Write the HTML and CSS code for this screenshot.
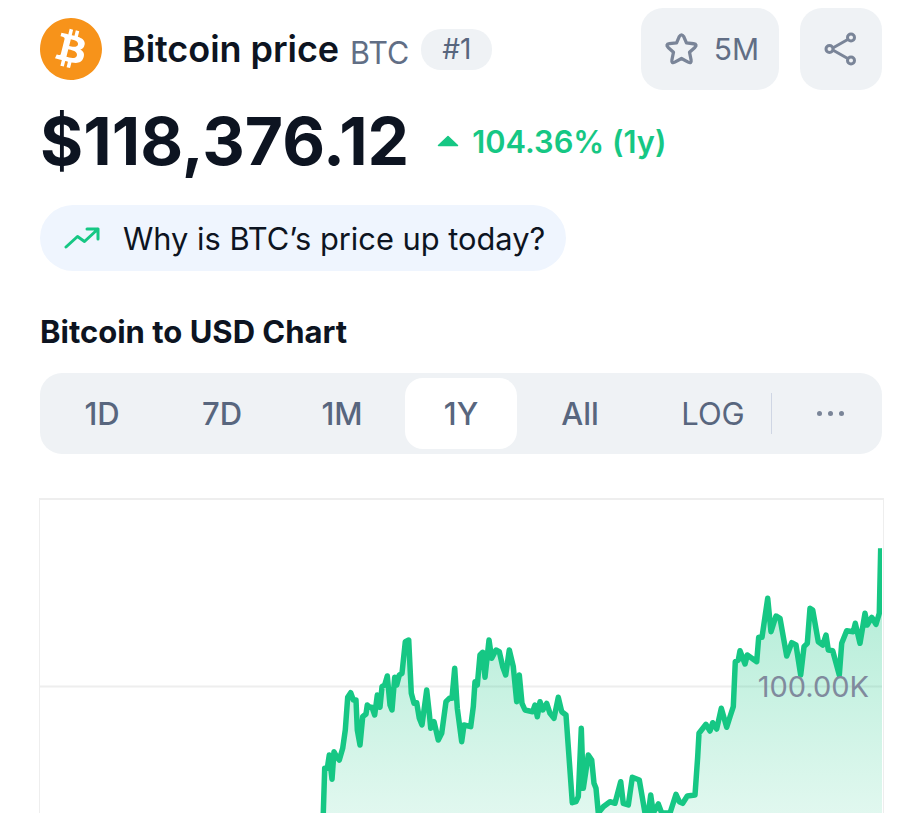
FILE: index.html
```html
<!DOCTYPE html>
<html lang="en">
<head>
<meta charset="utf-8">
<title>Bitcoin price</title>
<link rel="stylesheet" href="styles.css">
</head>
<body>
<main class="page">
  <header class="top">
    <svg class="logo" viewBox="0 0 24 24"><path fill="#f7931a" d="M23.638 14.904c-1.602 6.43-8.113 10.34-14.542 8.736C2.67 22.05-1.244 15.525.362 9.105 1.962 2.67 8.475-1.243 14.9.358c6.43 1.605 10.342 8.115 8.738 14.548v-.002zm-6.35-4.613c.24-1.59-.974-2.45-2.64-3.03l.54-2.153-1.315-.33-.525 2.107c-.345-.087-.705-.167-1.064-.25l.526-2.127-1.32-.33-.54 2.165c-.285-.067-.565-.132-.84-.2l-1.815-.45-.35 1.407s.975.225.955.236c.535.136.63.486.615.766l-1.477 5.92c-.075.166-.24.406-.614.314.015.02-.96-.24-.96-.24l-.66 1.51 1.71.426.93.242-.54 2.19 1.32.327.54-2.17c.36.1.705.19 1.05.273l-.51 2.154 1.32.33.545-2.19c2.24.427 3.93.257 4.64-1.774.57-1.637-.03-2.58-1.217-3.196.854-.193 1.5-.76 1.68-1.93h.01zm-3.01 4.22c-.404 1.64-3.157.75-4.05.53l.72-2.9c.896.23 3.757.67 3.33 2.37zm.41-4.24c-.37 1.49-2.662.735-3.405.55l.654-2.64c.744.18 3.137.524 2.75 2.084v.006z"/></svg>
    <h1 class="name">Bitcoin price</h1>
    <span class="symbol">BTC</span>
    <span class="rank">#1</span>
    <div class="actions">
      <button class="action watch">
        <svg class="star" viewBox="0 0 36 36"><path d="M15.800 5.500Q18 2 20.200 5.500L22.800 11.500 29.800 12.400Q33.800 13 31 16L25.800 20.700 27.300 28Q28 32 24.500 30.300L18 26.700 11.500 30.300Q8 32 8.700 28L10.200 20.700 5 16Q2.200 13 6.200 12.400L13.200 11.500z"/></svg>
        <span>5M</span>
      </button>
      <button class="action share" aria-label="Share">
        <svg class="share-icon" viewBox="0 0 36 36"><path d="M8 18L26.500 7.500M8 18l18.500 10.500"/><circle cx="6.500" cy="18" r="3.500"/><circle cx="28" cy="6.500" r="3.500"/><circle cx="28" cy="29.500" r="3.500"/></svg>
      </button>
    </div>
  </header>

  <div class="price-row">
    <span class="price">$118,376.12</span>
    <span class="change"><svg class="tri" viewBox="0 0 22 12"><path d="M11 1.500L20.500 10.500H1.500z"/></svg>104.36% (1y)</span>
  </div>

  <a class="why">
    <svg class="trend" viewBox="0 0 36 24"><path d="M2 21L13.500 10.500 20.500 15.500 34 3M23 3h11v10"/></svg>
    <span>Why is BTC’s price up today?</span>
  </a>

  <h2 class="chart-title">Bitcoin to USD Chart</h2>

  <nav class="tabs">
    <span class="tab">1D</span>
    <span class="tab">7D</span>
    <span class="tab">1M</span>
    <span class="tab active">1Y</span>
    <span class="tab">All</span>
    <span class="tab log">LOG</span>
    <span class="more"><i></i><i></i><i></i></span>
  </nav>

  <section class="chart">
    <svg class="plot" viewBox="40 500 842 313">
      <defs>
        <linearGradient id="area" gradientUnits="userSpaceOnUse" x1="0" y1="548" x2="0" y2="813">
          <stop offset="0" stop-color="#16c784" stop-opacity=".36"/>
          <stop offset="1" stop-color="#16c784" stop-opacity=".13"/>
        </linearGradient>
      </defs>
      <line class="grid" x1="40" y1="686.500" x2="882" y2="686.500"/>
      <path class="fill" fill="url(#area)" d="M323.300 813L324.700 768.300 327.300 768.300 329.300 755 332 779.300 334 751.700 336.700 756.700 339.300 760 342.700 748.300 345.300 730 347.700 697.300 350.700 692.700 353.300 700 356 700 357.300 730 360 745 362.700 716.700 366 714 367.300 705 370 707.300 372 707.300 374.700 715 377.300 695 380 707.300 382 686.700 384.700 685 387.300 676 390 705 392 710 394.700 677.300 396.700 685 399.300 675 402 673.300 405.300 641.700 408.700 640 411.300 693.300 414 703.300 416.700 702.700 419.300 718.300 422 725 426.700 690 429.300 713.300 430.700 728.300 434 721.700 438.300 740 441.700 733.300 446 701.700 449.300 698.300 452 698.300 454.700 668.300 457.300 708.300 461.700 741.700 464 725 470.700 726.700 473.300 706.700 475 681.700 477.300 685 480 655 482.700 652.300 485 677.300 489 640 491.700 658.300 496 650 499.300 651.700 502.700 666.700 505.700 675 509.300 650 513.300 666.700 516.700 701.700 519.300 675 522 703.300 525 710 532.700 711.700 535 705 537.300 716.700 540 701.700 542.700 710 546.700 703.300 550 713.300 554 718.300 558.300 697.300 561.700 711.700 566 715 572.300 802.700 576 801.700 578.300 796.700 581.300 728.300 583.300 788.300 588.300 755 591.700 760 594 783.300 596 788.300 598.300 813 603.300 806.700 610 801.700 615 803.300 620.700 781.700 623.300 803.300 628.300 805 632.300 777.300 639.300 780 645 813 648.300 813 650.700 795 653.300 813 658.300 804 661.700 813 670 813 676 794.300 679.300 801.700 682.700 803.300 687.300 796 695 795 697.700 756.700 699 733.300 706 724.300 710 731 712.700 722.700 716.700 729 721.300 708.300 726.700 727.300 730 716.700 733.300 706.700 735.300 661.700 738.300 660 740 650.700 745 664 747.300 655 756.700 661.700 758.700 637.300 762 637.300 767.700 598.300 771 631.700 776 616 780 618.300 786.700 656 791.700 642.700 796 645 800.700 675 804 646.700 807.300 643.300 810 608.300 812.700 610 818.300 641.700 822.700 645 826 635 828.300 650 832.700 650.700 839.300 675 841.700 643.300 846.700 630.700 853.300 631.700 855.300 623.300 860 643.300 865 613.300 867.300 625 871.700 617.300 876 624.300 879.300 613.300 880.700 548.300 882 548.300 882 813z"/>
      <path class="line" d="M323.300 813L324.700 768.300 327.300 768.300 329.300 755 332 779.300 334 751.700 336.700 756.700 339.300 760 342.700 748.300 345.300 730 347.700 697.300 350.700 692.700 353.300 700 356 700 357.300 730 360 745 362.700 716.700 366 714 367.300 705 370 707.300 372 707.300 374.700 715 377.300 695 380 707.300 382 686.700 384.700 685 387.300 676 390 705 392 710 394.700 677.300 396.700 685 399.300 675 402 673.300 405.300 641.700 408.700 640 411.300 693.300 414 703.300 416.700 702.700 419.300 718.300 422 725 426.700 690 429.300 713.300 430.700 728.300 434 721.700 438.300 740 441.700 733.300 446 701.700 449.300 698.300 452 698.300 454.700 668.300 457.300 708.300 461.700 741.700 464 725 470.700 726.700 473.300 706.700 475 681.700 477.300 685 480 655 482.700 652.300 485 677.300 489 640 491.700 658.300 496 650 499.300 651.700 502.700 666.700 505.700 675 509.300 650 513.300 666.700 516.700 701.700 519.300 675 522 703.300 525 710 532.700 711.700 535 705 537.300 716.700 540 701.700 542.700 710 546.700 703.300 550 713.300 554 718.300 558.300 697.300 561.700 711.700 566 715 572.300 802.700 576 801.700 578.300 796.700 581.300 728.300 583.300 788.300 588.300 755 591.700 760 594 783.300 596 788.300 598.300 813 603.300 806.700 610 801.700 615 803.300 620.700 781.700 623.300 803.300 628.300 805 632.300 777.300 639.300 780 645 813 648.300 813 650.700 795 653.300 813 658.300 804 661.700 813 670 813 676 794.300 679.300 801.700 682.700 803.300 687.300 796 695 795 697.700 756.700 699 733.300 706 724.300 710 731 712.700 722.700 716.700 729 721.300 708.300 726.700 727.300 730 716.700 733.300 706.700 735.300 661.700 738.300 660 740 650.700 745 664 747.300 655 756.700 661.700 758.700 637.300 762 637.300 767.700 598.300 771 631.700 776 616 780 618.300 786.700 656 791.700 642.700 796 645 800.700 675 804 646.700 807.300 643.300 810 608.300 812.700 610 818.300 641.700 822.700 645 826 635 828.300 650 832.700 650.700 839.300 675 841.700 643.300 846.700 630.700 853.300 631.700 855.300 623.300 860 643.300 865 613.300 867.300 625 871.700 617.300 876 624.300 879.300 613.300 880.700 548.300"/>
    </svg>
    <span class="axis-label">100.00K</span>
  </section>
</main>
</body>
</html>
```

FILE: styles.css
```css
* { box-sizing: border-box; }

html, body {
  margin: 0;
  height: 813px;
  overflow: hidden;
  background: #fff;
}

body {
  font-family: Inter, "Liberation Sans", sans-serif;
  color: #0d1421;
}

.page {
  padding: 8px 38px 0 40px;
}

.top {
  display: flex;
  align-items: center;
  height: 82px;
}

.logo {
  width: 62px;
  height: 62px;
  flex: none;
}

.name {
  margin: 0 0 0 20px;
  font-size: 36px;
  font-weight: 600;
  line-height: 40px;
  letter-spacing: -.05px;
}

.symbol {
  margin: 8px 0 0 11px;
  font-size: 30.500px;
  line-height: 34px;
  font-weight: 400;
  color: #616e85;
}

.rank {
  display: flex;
  align-items: center;
  justify-content: center;
  width: 71px;
  height: 41px;
  margin: 0 0 0 12px;
  border-radius: 20px;
  background: #eff2f5;
  font-size: 28px;
  color: #58667e;
}

.actions {
  display: flex;
  gap: 21px;
  margin-left: auto;
}

.action {
  display: flex;
  align-items: center;
  justify-content: center;
  height: 82px;
  padding: 0;
  border: 0;
  border-radius: 22px;
  background: #eff2f5;
  font: inherit;
  font-size: 30px;
  color: #616e85;
}

.watch {
  gap: 14px;
  width: 138px;
  padding-left: 2px;
}

.share {
  width: 82px;
}

.star {
  width: 37px;
  height: 37px;
  fill: none;
  stroke: #7a8598;
  stroke-width: 3.200;
  stroke-linejoin: round;
}

.share-icon {
  width: 36px;
  height: 36px;
  fill: #eff2f5;
  stroke: #7a8598;
  stroke-width: 3;
}

.price-row {
  display: flex;
  align-items: center;
  height: 72px;
  margin-top: 15px;
}

.price {
  font-size: 66px;
  font-weight: 700;
  line-height: 72px;
}

.change {
  display: flex;
  align-items: center;
  gap: 13px;
  margin-left: 28px;
  font-size: 30.800px;
  font-weight: 600;
  color: #16c784;
}

.tri {
  width: 22px;
  height: 12px;
  fill: #16c784;
  stroke: #16c784;
  stroke-width: 1.500;
  stroke-linejoin: round;
}

.why {
  display: inline-flex;
  align-items: center;
  gap: 23px;
  width: 526px;
  height: 66px;
  margin-top: 28px;
  padding-left: 24px;
  border-radius: 33px;
  background: #eff5fe;
  font-size: 30.800px;
  color: #0d1421;
}

.trend {
  width: 36px;
  height: 24px;
  fill: none;
  stroke: #16c784;
  stroke-width: 3;
  stroke-linecap: round;
  stroke-linejoin: round;
}

.chart-title {
  margin: 39px 0 0;
  font-size: 31px;
  font-weight: 700;
  line-height: 44px;
}

.tabs {
  display: flex;
  align-items: center;
  height: 81px;
  margin-top: 19px;
  padding: 0 0 0 2px;
  border-radius: 22px;
  background: #eff2f5;
}

.tab {
  display: flex;
  align-items: center;
  justify-content: center;
  width: 120px;
  height: 71px;
  font-size: 31px;
  font-weight: 500;
  color: #58667e;
}

.active {
  flex: none;
  width: 112px;
  margin: 0 3px;
  border-radius: 18px;
  background: #fff;
}

.log {
  width: 116px;
  margin-left: 15px;
  font-weight: 400;
}

.more {
  display: flex;
  flex: 1;
  align-items: center;
  justify-content: center;
  gap: 6px;
  height: 41px;
  padding-left: 6px;
  border-left: 1.500px solid #cfd6e4;
}

.more i {
  width: 5px;
  height: 5px;
  border-radius: 50%;
  background: #7a8598;
}

.chart {
  position: relative;
  height: 315px;
  margin: 44px -2px 0 -1px;
  border: 1px solid #eee;
  border-top-width: 2px;
  border-bottom: 0;
}

.plot {
  display: block;
  width: 842px;
  height: 313px;
}

.grid {
  stroke: #eeeeee;
  stroke-width: 2;
}

.line {
  fill: none;
  stroke: #16c784;
  stroke-width: 5.500;
  stroke-linejoin: round;
}

.axis-label {
  position: absolute;
  top: 170px;
  right: 14px;
  font-size: 29px;
  line-height: 34px;
  color: #808a9d;
}
```
